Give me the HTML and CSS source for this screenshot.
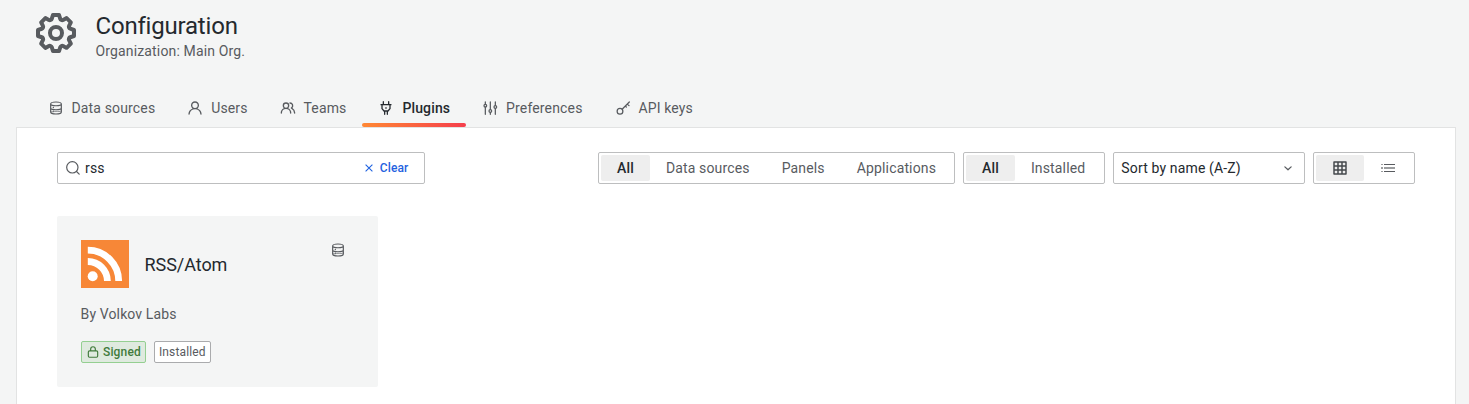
FILE: index.html
```html
<!DOCTYPE html>
<html lang="en">
<head>
<meta charset="utf-8">
<title>Configuration: Plugins</title>
<link rel="stylesheet" href="styles.css">
</head>
<body>
<svg class="defs" width="0" height="0">
  <symbol id="database" viewBox="0 0 24 24"><g fill="none" stroke="currentColor" stroke-width="1.800"><path d="M4 6c0-4 16-4 16 0v12c0 4-16 4-16 0zM4 6c0 3.500 16 3.500 16 0M4 12c0 3.500 16 3.500 16 0"/><path d="M4 17c2 2 5 0 8 0s6 1 8-1" stroke-width="1"/></g><circle cx="8" cy="11.200" r="1"/><circle cx="8" cy="16.800" r="1"/></symbol>
</svg>
<header class="page-header">
  <svg class="cog" viewBox="0 0 24 24"><path d="M21.32,9.55l-1.89-.63.89-1.78A1,1,0,0,0,20.13,6L18,3.87a1,1,0,0,0-1.15-.19l-1.78.89-.63-1.89A1,1,0,0,0,13.5,2h-3a1,1,0,0,0-.95.68L8.92,4.57,7.14,3.68A1,1,0,0,0,6,3.87L3.87,6a1,1,0,0,0-.19,1.15l.89,1.78-1.89.63A1,1,0,0,0,2,10.5v3a1,1,0,0,0,.68.95l1.89.63-.89,1.78A1,1,0,0,0,3.87,18L6,20.13a1,1,0,0,0,1.15.19l1.78-.89.63,1.89a1,1,0,0,0,.95.68h3a1,1,0,0,0,.95-.68l.63-1.89,1.78.89A1,1,0,0,0,18,20.13L20.13,18a1,1,0,0,0,.19-1.15l-.89-1.78,1.89-.63A1,1,0,0,0,22,13.5v-3A1,1,0,0,0,21.32,9.55ZM20,12.78l-1.2.4A2,2,0,0,0,17.64,16l.57,1.14-1.1,1.1L16,17.64a2,2,0,0,0-2.79,1.16l-.4,1.2H11.22l-.4-1.2A2,2,0,0,0,8,17.64l-1.14.57-1.1-1.1L6.36,16A2,2,0,0,0,5.2,13.18L4,12.78V11.22l1.2-.4A2,2,0,0,0,6.36,8L5.79,6.89l1.1-1.1L8,6.36A2,2,0,0,0,10.82,5.2l.4-1.2h1.56l.4,1.2A2,2,0,0,0,16,6.36l1.14-.57,1.1,1.1L17.64,8a2,2,0,0,0,1.16,2.79l1.2.4ZM12,8a4,4,0,1,0,4,4A4,4,0,0,0,12,8Zm0,6a2,2,0,1,1,2-2A2,2,0,0,1,12,14Z"/></svg>
  <div>
    <h1 class="title">Configuration</h1>
    <div class="subtitle">Organization: Main Org.</div>
  </div>
</header>
<nav class="tabs">
  <a class="tab"><svg class="icon"><use href="#database"/></svg>Data sources</a>
  <a class="tab"><svg class="icon" viewBox="0 0 24 24"><path d="M15.71,12.71a6,6,0,1,0-7.42,0,10,10,0,0,0-6.22,8.18,1,1,0,0,0,2,.22,8,8,0,0,1,15.9,0,1,1,0,0,0,1,.89h.11a1,1,0,0,0,.88-1.1A10,10,0,0,0,15.71,12.71ZM12,12a4,4,0,1,1,4-4A4,4,0,0,1,12,12Z"/></svg>Users</a>
  <a class="tab"><svg class="icon" viewBox="0 0 24 24"><path d="M12.3,12.22A4.92,4.92,0,0,0,14,8.5a5,5,0,0,0-10,0,4.92,4.92,0,0,0,1.7,3.72A8,8,0,0,0,1,19.5a1,1,0,0,0,2,0,6,6,0,0,1,12,0,1,1,0,0,0,2,0A8,8,0,0,0,12.3,12.22ZM9,11.5a3,3,0,1,1,3-3A3,3,0,0,1,9,11.5Zm9.740.32A5,5,0,0,0,15,3.500a1,1,0,0,0,0,2,3,3,0,0,1,3,3,3,3,0,0,1-1.500,2.590,1,1,0,0,0-.5.84,1,1,0,0,0,.45.86l.39.26.13.07a7,7,0,0,1,4,6.380,1,1,0,0,0,2,0A9,9,0,0,0,18.740,11.820Z"/></svg>Teams</a>
  <a class="tab active"><svg class="icon line" viewBox="0 0 24 24"><path d="M4.500 7h15M8 2.500V7M16 2.500V7M6 7v6l3 3.500h6l3-3.500V7M10 17v4.500M14 17v4.500"/><path d="M12 11.500v1"/></svg>Plugins</a>
  <a class="tab"><svg class="icon line" viewBox="0 0 24 24"><path d="M5 3v3M5 11v10.500M12.500 3v11M12.500 19v2.500M20 3v5M20 13v8.500"/><circle cx="5" cy="8.500" r="2"/><circle cx="12.500" cy="16.500" r="2"/><circle cx="20" cy="10.500" r="2"/></svg>Preferences</a>
  <a class="tab"><svg class="icon line" viewBox="0 0 24 24"><circle cx="7.500" cy="17" r="4.300"/><path d="M10.700 13.800 21.500 3M18.500 6 21 8.500M15.500 9l1.500 1.500"/></svg>API keys</a>
</nav>
<main class="panel">
  <div class="toolbar">
    <div class="search">
      <svg class="icon" viewBox="0 0 24 24"><g fill="none" stroke="currentColor" stroke-width="1.800" stroke-linecap="round"><circle cx="11" cy="11" r="8.500"/><path d="m17.300 17.300 4 4"/></g></svg>
      <span class="query">rss</span>
      <button class="clear"><svg viewBox="0 0 12 12"><path d="m2.600 2.600 6.800 6.800m0-6.800-6.800 6.800"/></svg>Clear</button>
    </div>
    <div class="filters">
      <div class="radio types"><span class="option selected">All</span><span class="option">Data sources</span><span class="option">Panels</span><span class="option">Applications</span></div>
      <div class="radio states"><span class="option selected">All</span><span class="option">Installed</span></div>
      <div class="select">Sort by name (A-Z)<svg class="icon line" viewBox="0 0 24 24"><path d="m7.300 10.300 4.700 4.400 4.700-4.400"/></svg></div>
      <div class="radio views">
        <span class="option selected"><svg class="icon line grid" viewBox="0 0 24 24"><path d="M3 3h18v18H3zM3 9h18M3 15h18M9 3v18M15 3v18"/></svg></span>
        <span class="option"><svg class="icon" viewBox="0 0 16 16"><path d="M4 4h11v1H4zM4 11h11v1H4z"/><path opacity=".6" d="M4 7h11v2H4zM1 4h2v1H1zM1 7h2v2H1zM1 11h2v1H1z"/></svg></span>
      </div>
    </div>
  </div>
  <article class="card">
    <div class="card-head">
      <svg class="logo" viewBox="0 0 48 48"><path fill="#f78737" d="M0 0h48v48H0z"/><circle cx="11.700" cy="36.300" r="5" fill="#fff"/><path fill="none" stroke="#fff" stroke-width="6.800" d="M6.800 21.500A19.600 19.600 0 0 1 26.400 41.100M6.800 10.200A30.900 30.900 0 0 1 37.700 41.100"/></svg>
      <h2 class="name">RSS/Atom</h2>
      <svg class="icon kind"><use href="#database"/></svg>
    </div>
    <div class="author">By Volkov Labs</div>
    <div class="badges">
      <span class="badge signed"><svg viewBox="0 0 24 24"><path d="M6 10h12a2 2 0 0 1 2 2v7a2 2 0 0 1-2 2H6a2 2 0 0 1-2-2v-7a2 2 0 0 1 2-2zM8 10V7a4 4 0 0 1 8 0v3"/></svg>Signed</span>
      <span class="badge">Installed</span>
    </div>
  </article>
</main>
</body>
</html>
```
FILE: styles.css
```css
* { box-sizing: border-box; }
body {
  margin: 0;
  height: 404px;
  overflow: hidden;
  display: flex;
  flex-direction: column;
  background: #f4f5f5;
  color: #24292e;
  font: 14px/22px Roboto, sans-serif;
  letter-spacing: 0.15px;
}
.defs { position: absolute; }
svg { fill: currentColor; flex: none; }
.icon { width: 16px; height: 16px; }
.line { fill: none; stroke: currentColor; stroke-width: 1.9; stroke-linecap: round; stroke-linejoin: round; }
.grid { color: #44484c; stroke-width: 2.2; }
.page-header { display: flex; flex: none; height: 89px; padding: 9px 32px 0; gap: 15.5px; color: #585b5f; }
.cog { width: 48px; height: 48px; }
.title { margin: 3px 0 0; font-size: 24px; line-height: 28px; font-weight: 400; letter-spacing: -0.2px; color: #24292e; }
.subtitle { line-height: 22px; }
.tabs { display: flex; flex: none; height: 38px; padding-left: 31.6px; color: #585b5f; }
.tab { position: relative; display: flex; align-items: center; gap: 7.9px; padding: 0 16px; }
.active { color: #24292e; font-weight: 500; }
.active::after {
  content: "";
  position: absolute;
  left: 0;
  right: 0;
  bottom: 0;
  height: 4px;
  border-radius: 2px;
  background: linear-gradient(90deg, #ff8833, #f53e4c);
}
.panel { flex: 1; min-height: 0; margin: 0 13px 0 16px; padding: 24px 40px; background: #fff; border: 1px solid #e2e3e3; border-bottom: 0; }
.toolbar { display: flex; justify-content: space-between; }
.search { display: flex; align-items: center; width: 368px; height: 32px; padding: 0 15.5px 0 7px; border: 1px solid #bdbebf; border-radius: 2px; }
.search .icon { color: #585b5f; }
.query { flex: 1; margin-left: 4px; }
.clear { display: flex; align-items: center; gap: 5px; padding: 0; border: 0; background: none; color: #1f62e0; font: 500 12px/22px Roboto, sans-serif; letter-spacing: 0.15px; }
.clear svg { width: 12px; height: 12px; stroke: currentColor; stroke-width: 1.1; }
.filters { display: flex; gap: 8px; }
.radio { display: flex; height: 32px; padding: 2px; border: 1px solid #bdbebf; border-radius: 2px; color: #585b5f; }
.option { display: flex; align-items: center; justify-content: center; padding: 0 16px; border-radius: 2px; white-space: nowrap; }
.selected { background: #eeeeee; color: #24292e; font-weight: 500; }
.types { width: 357px; }
.states { width: 142px; }
.select { display: flex; align-items: center; justify-content: space-between; width: 192px; height: 32px; padding: 0 8px 0 7.3px; border: 1px solid #bdbebf; border-radius: 2px; }
.select .icon { color: #585b5f; }
.card { width: 321px; height: 171px; margin-top: 32px; padding: 24px; background: #f4f5f5; border-radius: 2px; }
.card-head { display: flex; align-items: center; height: 48px; }
.logo { width: 48px; height: 48px; }
.name { flex: 1; margin: 2px 0 0 15.5px; font-size: 18px; line-height: 22px; font-weight: 400; letter-spacing: -0.05px; }
.kind { align-self: flex-start; margin: 2px 8px 0 0; color: #585b5f; }
.author { margin: 15px 0 0 -0.4px; color: #585b5f; letter-spacing: 0.12px; }
.badges { display: flex; gap: 8px; margin-top: 16px; }
.badge { display: flex; align-items: center; gap: 3px; height: 22px; padding: 0 4px; border: 1px solid #aaabad; border-radius: 2px; background: #fff; color: #585b5f; font-size: 12px; line-height: 20px; }
.signed { border-color: #94cf91; background: #dfeadf; color: #417b3c; font-weight: 500; }
.signed svg { width: 14px; height: 14px; fill: none; stroke: currentColor; stroke-width: 2; }
```
